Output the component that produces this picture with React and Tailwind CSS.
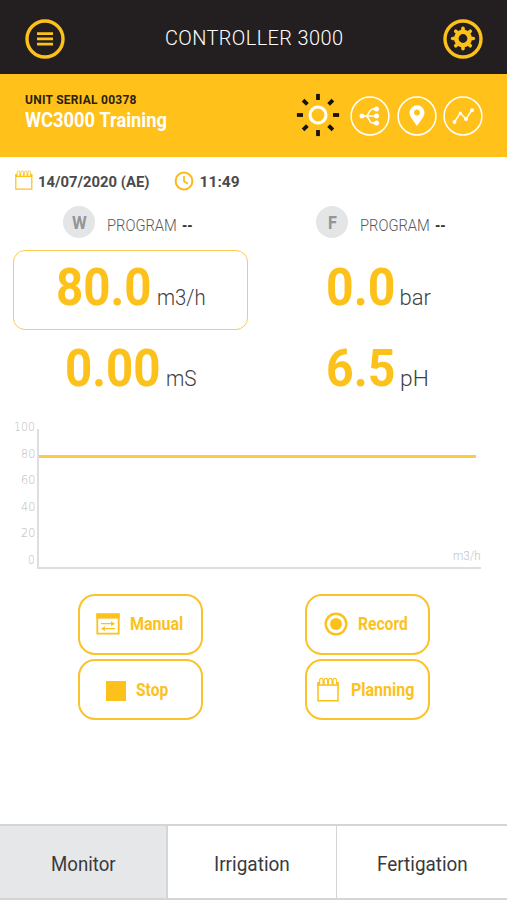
import { useLayoutEffect, useRef, useState } from "react";

// Condenses a line of text horizontally so that it fills the width of its box.
function Fit({ className = "", children }) {
  const box = useRef(null);
  const line = useRef(null);
  const [scale, setScale] = useState(1);
  useLayoutEffect(() => {
    const fit = () => setScale(box.current.clientWidth / line.current.offsetWidth);
    fit();
    document.fonts?.ready.then(fit);
  }, []);
  return (
    <span ref={box} className={`block shrink-0 whitespace-nowrap ${className}`}>
      <span ref={line} className="inline-block origin-left" style={{ transform: `scaleX(${scale})` }}>
        {children}
      </span>
    </span>
  );
}

function MenuIcon() {
  return (
    <svg className="size-10" viewBox="0 0 40 40" fill="none" stroke="#fdc11b">
      <circle cx="20" cy="20" r="18" strokeWidth="3.4" />
      <path d="M12 14.6h16M12 19.9h16M12 25.2h16" strokeWidth="2.8" />
    </svg>
  );
}

function GearIcon() {
  return (
    <svg className="size-10" viewBox="0 0 40 40" fill="none" stroke="#fdc11b">
      <circle cx="20" cy="20" r="18" strokeWidth="3.4" />
      <circle cx="20" cy="19.5" r="6.7" strokeWidth="4.6" />
      {[0, 45, 90, 135, 180, 225, 270, 315].map((a) => (
        <path key={a} d="M20 11.500V9.200" strokeWidth="3.6" strokeLinecap="round" transform={`rotate(${a} 20 19.5)`} />
      ))}
    </svg>
  );
}

function SunIcon() {
  return (
    <svg className="mb-[2px] size-11" viewBox="0 0 44 44" fill="none">
      <circle cx="22" cy="22" r="8" stroke="#fff" strokeWidth="3.2" />
      {[0, 45, 90, 135, 180, 225, 270, 315].map((a) => (
        <path key={a} d="M22 7V.9" stroke="#17130c" strokeWidth="3.8" transform={`rotate(${a} 22 22)`} />
      ))}
    </svg>
  );
}

function RoundIcon({ children }) {
  return (
    <svg className="size-10" viewBox="0 0 40 40" fill="none" stroke="#fff">
      <circle cx="20" cy="20" r="18.9" strokeWidth="1.5" />
      {children}
    </svg>
  );
}

function CalendarIcon({ className }) {
  return (
    <svg className={className} viewBox="0 0 22 25" fill="none" stroke="#fdc11b">
      <path d="M1 6.5h20v17.3H1z" strokeWidth="1.5" />
      <path d="M.3 5h21.4v3.8H.3z" fill="#fdc11b" stroke="none" />
      <path
        d="M2.600 7.200V3.500a1.700 2.300 0 0 1 3.400 0v3.700M7.200 7.200V3.500a1.700 2.300 0 0 1 3.400 0v3.700M11.600 7.200V3.500a1.700 2.300 0 0 1 3.400 0v3.700M16.100 7.200V3.500a1.700 2.300 0 0 1 3.400 0v3.700"
        fill="#fff"
        strokeWidth="1.1"
      />
    </svg>
  );
}

function Program({ letter, letterWidth }) {
  return (
    <div className="flex h-8 items-center">
      <div className="flex size-8 items-center justify-center rounded-full bg-[#e4e5e7] text-[18px] font-bold text-[#939598]">
        <Fit className={letterWidth}>{letter}</Fit>
      </div>
      <div className="ml-[11.500px] flex pt-[7px] leading-[24px] text-[16px]">
        <Fit className="w-[70px] font-light text-[#58595b]">PROGRAM</Fit>
        <Fit className="ml-[5px] w-[11px] font-bold text-[#333]">--</Fit>
      </div>
    </div>
  );
}

function Reading({ value, unit, valueWidth, unitWidth, className }) {
  return (
    <div className={`flex h-20 items-baseline leading-[74px] ${className}`}>
      <Fit className={`text-[51px] font-bold text-[#fdc11b] ${valueWidth}`}>{value}</Fit>
      <Fit className={`ml-[5px] text-[22px] font-light text-[#3f4042] ${unitWidth}`}>{unit}</Fit>
    </div>
  );
}

function Action({ icon, label, width, pad, gap }) {
  return (
    <button className={`flex h-[61px] w-[125px] items-center rounded-[17px] border-2 border-[#fac22b] text-[17.5px] font-bold text-[#fdc11b] ${pad} ${gap}`}>
      {icon}
      <Fit className={width}>{label}</Fit>
    </button>
  );
}

export default function App() {
  return (
    <div className="flex h-[900px] w-[507px] flex-col overflow-hidden bg-white font-['Roboto',sans-serif]">
      <header className="flex h-[74px] shrink-0 items-center justify-between bg-[#231f20] pt-[4px] pr-[24px] pl-[25px]">
        <MenuIcon />
        <Fit className="mb-[2px] w-[178px] text-[20.500px] leading-[24px] font-light tracking-[0.400px] text-white">
          CONTROLLER 3000
        </Fit>
        <GearIcon />
      </header>

      <section className="flex h-[83px] shrink-0 justify-between bg-[#ffc11a] pr-[24px] pl-[25px]">
        <div className="pt-[15px]">
          <Fit className="w-[112px] text-[13.500px] leading-[20px] font-bold tracking-[0.300px] text-[#2a1f10]">
            UNIT SERIAL 00378
          </Fit>
          <Fit className="w-[142px] text-[19.5px] leading-[23px] font-bold text-white">WC3000 Training</Fit>
        </div>
        <div className="flex h-[83px] items-center">
          <SunIcon />
          <div className="ml-[10px] flex gap-[6.5px]">
            <RoundIcon>
              <path d="M11 20h16M15 20c5 0 3-7 8-7h3M15 20c5 0 3 7 8 7h3" strokeWidth="1.4" />
              <g fill="#fff" stroke="none">
                <circle cx="12" cy="20" r="2.5" />
                <circle cx="26.5" cy="13" r="2.5" />
                <circle cx="26.5" cy="20" r="2.5" />
                <circle cx="26.5" cy="27" r="2.5" />
              </g>
            </RoundIcon>
            <RoundIcon>
              <path
                d="M20 30c-3-5-7.500-9.300-7.500-13.300a7.500 7.500 0 0 1 15 0C27.500 20.700 23 25 20 30zM20 13.600a2.900 2.900 0 1 0 0 5.800 2.900 2.900 0 0 0 0-5.800z"
                fill="#fff"
                fillRule="evenodd"
                stroke="none"
              />
            </RoundIcon>
            <RoundIcon>
              <path d="M11.500 26l5.800-8.800 5.700 5.700 6-8.700" strokeWidth="1.400" />
              <g fill="#fff" stroke="none">
                <circle cx="11.500" cy="26" r="2" />
                <circle cx="17.300" cy="17.200" r="1.600" />
                <circle cx="23" cy="22.900" r="2" />
                <circle cx="29" cy="14.200" r="2" />
              </g>
            </RoundIcon>
          </div>
        </div>
      </section>

      <div className="flex h-[49px] shrink-0 items-center pl-[15px] text-[15.5px] font-bold text-[#4a4a4c]">
        <CalendarIcon className="mb-[3px] h-[20px] w-[17.6px]" />
        <Fit className="mt-[2px] ml-[5.500px] w-[112px]">14/07/2020 (AE)</Fit>
        <svg className="mb-px ml-[23.500px] size-5" viewBox="0 0 20 20" fill="none" stroke="#fdb91b">
          <circle cx="10" cy="10" r="8.400" strokeWidth="2" />
          <path d="M10 5v5.200l3.800 2.600" strokeWidth="1.700" />
        </svg>
        <Fit className="mt-[2px] ml-[6px] w-[40px]">11:49</Fit>
      </div>

      <div className="flex h-[44px] shrink-0 pl-[63px]">
        <div className="w-[253px]">
          <Program letter="W" letterWidth="w-[15px]" />
        </div>
        <Program letter="F" letterWidth="w-[9px]" />
      </div>

      <div className="grid shrink-0 grid-cols-[235px_1fr] pl-[13px]">
        <Reading
          value="80.0"
          unit="m3/h"
          valueWidth="w-[96px]"
          unitWidth="w-[49px]"
          className="rounded-[12px] border-[1.500px] border-[#fbcb55] pl-[41.500px]"
        />
        <Reading value="0.0" unit="bar" valueWidth="w-[69px]" unitWidth="w-[31px]" className="pt-px pl-[77.500px]" />
        <Reading value="0.00" unit="mS" valueWidth="w-[96px]" unitWidth="w-[31px]" className="pt-[2px] pl-[51.500px]" />
        <Reading value="6.5" unit="pH" valueWidth="w-[69px]" unitWidth="w-[29px]" className="pt-[2px] pl-[78px]" />
      </div>

      <div className="mt-[4px] flex h-[160px] shrink-0 pl-[14px] font-['DejaVu_Sans',sans-serif] text-[12px] font-extralight text-[#b8b8b8]">
        <div className="flex w-[21px] flex-col items-end leading-[26.500px]">
          <Fit className="w-[21px]">100</Fit>
          <Fit className="w-[14px]">80</Fit>
          <Fit className="w-[14px]">60</Fit>
          <Fit className="w-[14px]">40</Fit>
          <Fit className="w-[14px]">20</Fit>
          <Fit className="w-[7px]">0</Fit>
        </div>
        <div className="mt-[15px] ml-[2px] flex h-[140px] w-[444px] flex-col justify-between border-b-2 border-l-2 border-[#dededf]">
          <div className="mt-[26px] h-[3px] w-[437px] bg-[#fcca45]" />
          <Fit className="w-[28px] self-end font-['Roboto',sans-serif] font-light leading-[22px] text-[#c4c4c4]">m3/h</Fit>
        </div>
      </div>

      <div className="mt-[19.500px] grid shrink-0 grid-cols-[227px_125px] gap-y-[4.500px] pl-[78px]">
        <Action
          label="Manual"
          width="w-[53px]"
          pad="pl-[16px]"
          gap="gap-[9.500px]"
          icon={
            <svg className="h-[22px] w-[24px]" viewBox="0 0 24 22" fill="none" stroke="#fdc11b">
              <path d="M1.300 1.300h21.400v19.400H1.300z" strokeWidth="1.800" />
              <path d="M.4.400h23.200v5.200H.4z" fill="#fdc11b" stroke="none" />
              <path d="M5 10.700h13M6 15.700h13" strokeWidth="1.300" />
              <path d="M15 8.300v4.800l4-2.400zM9 13.300v4.800l-4-2.400z" fill="#fdc11b" stroke="none" />
            </svg>
          }
        />
        <Action
          label="Record"
          width="w-[50px]"
          pad="pl-[16.500px]"
          gap="gap-[10px]"
          icon={
            <svg className="size-6" viewBox="0 0 24 24" fill="none">
              <circle cx="12" cy="12" r="10.300" stroke="#fdc11b" strokeWidth="2.400" />
              <circle cx="12" cy="12" r="6" fill="#fdc11b" />
            </svg>
          }
        />
        <Action
          label="Stop"
          width="w-[32px]"
          pad="pl-[26px] pt-[2px]"
          gap="gap-[10px]"
          icon={<span className="size-5 bg-[#fdc11b]" />}
        />
        <Action
          label="Planning"
          width="w-[63px]"
          pad="pl-[10px] pt-[2px]"
          gap="gap-[12px]"
          icon={<CalendarIcon className="mb-[3px] h-[25px] w-[22px]" />}
        />
      </div>

      <nav className="mt-auto grid h-[76px] shrink-0 grid-cols-[168px_169px_170px] border-y-2 border-[#d4d5d7] text-[19.500px] text-[#3a3a3c]">
        <div className="flex items-center justify-center border-r-2 border-[#d4d5d7] bg-[#e6e7e9] pt-[5px]">
          <Fit className="w-[65px]">Monitor</Fit>
        </div>
        <div className="flex items-center justify-center border-r border-[#d4d5d7] pt-[5px]">
          <Fit className="w-[76px]">Irrigation</Fit>
        </div>
        <div className="flex items-center justify-center pt-[5px]">
          <Fit className="w-[91px]">Fertigation</Fit>
        </div>
      </nav>
    </div>
  );
}
